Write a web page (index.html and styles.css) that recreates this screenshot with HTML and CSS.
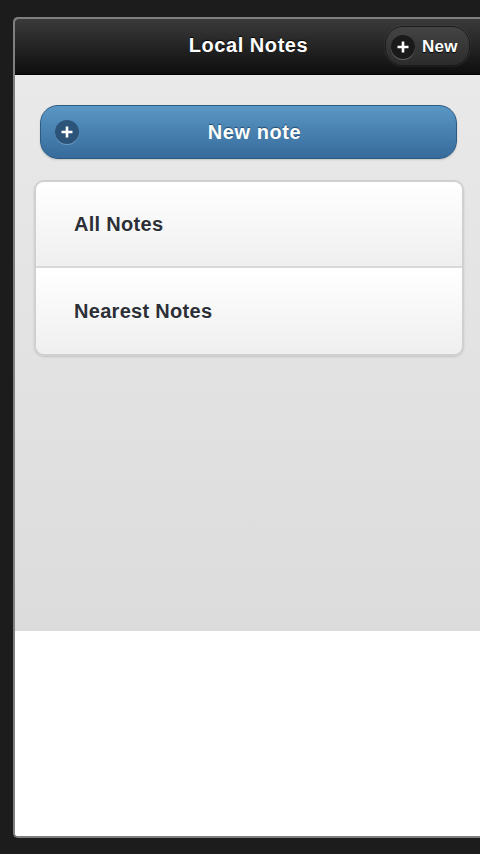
FILE: index.html
```html
<!DOCTYPE html>
<html lang="en">
<head>
  <meta charset="UTF-8">
  <title>Local Notes</title>
  <link rel="stylesheet" href="styles.css">
</head>
<body>

  <div class="frame">
    <div class="header">
      <h1>Local Notes</h1>
      <a class="btn-new" href="#">
        <span class="plus plus-dark">
          <svg width="14" height="14" viewBox="0 0 14 14"><path d="M7 1.5v11M1.5 7h11" stroke="#fff" stroke-width="2.6"/></svg>
        </span>
        New
      </a>
    </div>

    <div class="content">
      <a class="btn-main" href="#">
        <span class="plus plus-blue">
          <svg width="14" height="14" viewBox="0 0 14 14"><path d="M7 1.5v11M1.5 7h11" stroke="#fff" stroke-width="2.6"/></svg>
        </span>
        New note
      </a>

      <ul class="list">
        <li><a href="#">All Notes</a></li>
        <li><a href="#">Nearest Notes</a></li>
      </ul>
    </div>

    <div class="blank"></div>
  </div>

</body>
</html>
```

FILE: styles.css
```css
html, body {
  margin: 0;
  height: 100%;
}

body {
  font-family: "Liberation Sans", Arial, sans-serif;
  font-weight: bold;
  background-color: #1c1c1c;
  padding: 17px 0 16px 13px;
  box-sizing: border-box;
  overflow: hidden;
}

a {
  text-decoration: none;
}

.frame {
  height: 100%;
  display: flex;
  flex-direction: column;
  box-sizing: border-box;
  border: 2px solid #7f7f7f;
  border-right: none;
  border-radius: 5px 0 0 5px;
  overflow: hidden;
  background-color: #fff;
}

.header {
  height: 55px;
  flex: none;
  display: flex;
  align-items: center;
  justify-content: flex-end;
  position: relative;
  padding-right: 10px;
  background: linear-gradient(#3a3a3a, #0e0e0e);
  border-bottom: 1px solid #000;
}

.header h1 {
  position: absolute;
  left: 0;
  width: 467px;
  margin: 0 0 3px;
  text-align: center;
  font-size: 20px;
  letter-spacing: 0.55px;
  color: #fff;
  text-shadow: 0 -1px 1px #000;
}

.btn-new {
  width: 85px;
  height: 40px;
  margin-top: -1px;
  box-sizing: border-box;
  display: flex;
  align-items: center;
  gap: 7px;
  padding: 1px 0 0 5px;
  font-size: 17px;
  letter-spacing: 0.3px;
  color: #fff;
  background: linear-gradient(#444, #2b2b2b);
  border: 1px solid #1a1a1a;
  border-radius: 18px;
  box-shadow: 0 0 1px #777;
  text-shadow: 0 1px 1px #000;
}

.plus {
  width: 24px;
  height: 24px;
  flex: none;
  border-radius: 50%;
  display: flex;
  align-items: center;
  justify-content: center;
}

.plus-dark {
  background-color: #1a1a1a;
  box-shadow: 0 1px 0 #666;
}

.plus-blue {
  background-color: #2c5378;
  box-shadow: 0 1px 0 #6d9cc2;
}

.content {
  height: 556px;
  flex: none;
  box-sizing: border-box;
  padding: 30px 16px 0 19px;
  background: linear-gradient(#e9e9e9, #dcdcdc);
}

.btn-main {
  margin: 0 7px 0 6px;
  height: 54px;
  box-sizing: border-box;
  display: flex;
  align-items: center;
  position: relative;
  justify-content: center;
  padding-left: 12px;
  font-size: 20px;
  letter-spacing: 0.6px;
  color: #fff;
  background: linear-gradient(#5a97c4, #366b9c);
  border: 1px solid #2d5a82;
  border-radius: 18px;
  box-shadow: 0 1px 2px #c4c4c4;
  text-shadow: 0 -1px 1px #24496b;
}

.btn-main .plus {
  position: absolute;
  left: 14px;
}

.list {
  list-style: none;
  margin: 21px 0 0;
  padding: 0;
  border: 2px solid #d0d0d0;
  border-radius: 10px;
  overflow: hidden;
  box-shadow: 0 1px 2px #c4c4c4;
}

.list li {
  height: 84px;
  background: linear-gradient(#fff, #efefef);
}

.list li + li {
  height: 86px;
  border-top: 2px solid #d9d9d9;
}

.list a {
  display: flex;
  align-items: center;
  height: 100%;
  padding-left: 38px;
  font-size: 20px;
  letter-spacing: 0.3px;
  color: #2c2f36;
  text-shadow: 0 1px 0 #fff;
}

.blank {
  flex: 1;
  background-color: #fff;
}
```
